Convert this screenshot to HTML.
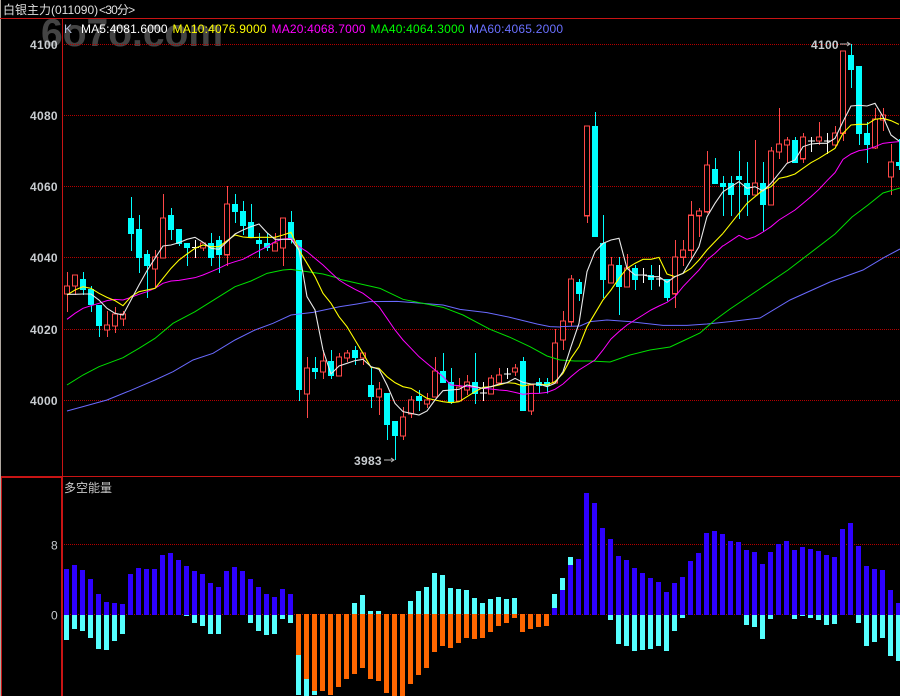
<!DOCTYPE html>
<html><head><meta charset="utf-8"><title>白银主力</title>
<style>
html,body{margin:0;padding:0;background:#000;width:900px;height:696px;overflow:hidden}
svg{display:block;position:absolute;left:0;top:0}
path,polyline,line{vector-effect:non-scaling-stroke;fill:none}
.c{shape-rendering:crispEdges}
.w{stroke:#00ffff;stroke-width:1}
.b{stroke:#00ffff;stroke-width:6}
.r{stroke:#ff4848;stroke-width:1.25}
.rb{stroke:#ff4848;stroke-width:1.25;fill:#000}
.x{stroke:#fff;stroke-width:1}
.m5{stroke:#e8e8e8;stroke-width:1.1}
.m10{stroke:#ffff00;stroke-width:1.1}
.m20{stroke:#ff00ff;stroke-width:1}
.m40{stroke:#00e000;stroke-width:1}
.m60{stroke:#6a6aff;stroke-width:1}
.t{font-family:"Liberation Sans","Noto Sans CJK SC",sans-serif;font-size:12px}
.lb{font-family:"Liberation Sans",sans-serif;font-size:12px;font-weight:bold;fill:#c8ccd0;letter-spacing:.3px}
.bar{stroke-width:5;shape-rendering:crispEdges}
</style></head>
<body>
<svg width="900" height="696" viewBox="0 0 900 696" xmlns="http://www.w3.org/2000/svg">
<defs><pattern id="dot" x="0" y="0" width="2" height="1" patternUnits="userSpaceOnUse"><rect x="0" y="0" width="1" height="1" fill="#b40000"/></pattern></defs>
<rect width="900" height="696" fill="#000"/>
<svg x="0" y="19" width="900" height="40" viewBox="0 19 900 40"><text x="41" y="46" font-family="Liberation Sans,sans-serif" font-size="39" font-weight="bold" fill="#444444">6o7o.com</text></svg>

<!-- frame -->
<g class="c">
<line x1="0.5" y1="0" x2="0.5" y2="696" stroke="#b0a8a0"/>
<line x1="0" y1="18.5" x2="900" y2="18.5" stroke="#c81414"/>
<line x1="62.5" y1="19" x2="62.5" y2="696" stroke="#c81414"/>
<line x1="61.5" y1="476" x2="61.5" y2="696" stroke="#c81414"/>
<line x1="1" y1="476.5" x2="900" y2="476.5" stroke="#c81414"/>
<line x1="1" y1="477.5" x2="62" y2="477.5" stroke="#c81414"/>
<line x1="1.5" y1="477" x2="1.5" y2="696" stroke="#c81414"/>
</g>
<!-- grid -->
<g fill="url(#dot)" class="c">
<rect x="63" y="44" width="837" height="1"/>
<rect x="63" y="115" width="837" height="1"/>
<rect x="63" y="186" width="837" height="1"/>
<rect x="63" y="257" width="837" height="1"/>
<rect x="63" y="329" width="837" height="1"/>
<rect x="63" y="400" width="837" height="1"/>
<rect x="63" y="544" width="837" height="1"/>
<rect x="63" y="614" width="837" height="1"/>
</g>

<!-- candles A -->
<g class="c" transform="translate(0 180) scale(1 .33333)">
<path class="r" d="M67.5 276V396M75.5 285V345M107.5 393V471M115.5 381V459M123.5 393V438M155.5 210V321M163.5 42V234M203.5 189V213M227.5 18V258M275.5 159V213M283.5 114V258"/>
<path class="rb" d="M64.5 318h5V342h-5zM72.5 285h5V318h-5zM104.5 435h5V450h-5zM112.5 402h5V438h-5zM120.5 402h5V417h-5zM152.5 231h5V267h-5zM160.5 114h5V234h-5zM200.5 189h5V204h-5zM224.5 72h5V224h-5zM272.5 189h5V213h-5zM280.5 114h5V204h-5z"/>
<path class="w" d="M83.5 276V345M91.5 318V396M99.5 375V471M131.5 51V213M139.5 105V279M147.5 210V354M171.5 84V180M179.5 147V198M187.5 189V258M211.5 159V258M219.5 168V279M235.5 42V129M243.5 63V165M251.5 72V174M259.5 159V234M267.5 159V213M291.5 93V190"/>
<path class="b" d="M83 297V330M91 327V375M99 375V438M131 114V162M139 147V234M147 222V258M171 105V150M179 147V192M187 189V204M211 189V234M219 180V225M235 72V96M243 93V138M251 126V174M259 180V192M267 189V204M291 126V180"/>
<path class="x" d="M195.5 180V234M192 203H199"/>
</g>
<!-- candles B -->
<g class="c" transform="translate(0 230) scale(1 .33333)">
<path class="r" d="M307.5 381V564M323.5 360V447M339.5 369V438M347.5 360V396M363.5 369V405M379.5 456V555M403.5 531V630M411.5 498V564M427.5 489V534M435.5 381V501M459.5 444V514M467.5 435V495M491.5 435V492M499.5 414V465M515.5 402V438M531.5 465V555M555.5 297V459"/>
<path class="rb" d="M304.5 414h5V492h-5zM320.5 393h5V426h-5zM336.5 381h5V438h-5zM344.5 369h5V384h-5zM360.5 369h5V384h-5zM376.5 477h5V501h-5zM400.5 561h5V618h-5zM408.5 510h5V552h-5zM424.5 510h5V522h-5zM432.5 423h5V501h-5zM456.5 471h5V513h-5zM464.5 456h5V480h-5zM488.5 444h5V492h-5zM496.5 435h5V459h-5zM512.5 414h5V426h-5zM528.5 465h5V543h-5zM552.5 339h5V459h-5z"/>
<path class="w" d="M299.5 30V513M315.5 381V447M331.5 360V447M355.5 348V405M371.5 414V534M387.5 489V630M395.5 573V690M419.5 480V543M443.5 369V459M451.5 414V522M475.5 369V522M523.5 381V543M539.5 444V490M547.5 444V490"/>
<path class="b" d="M299 30V480M315 414V426M331 393V438M355 360V384M371 465V501M387 489V585M395 573V618M419 498V513M443 423V459M451 456V516M475 456V492M523 393V543M539 456V468M547 456V468"/>
<path class="x" d="M483.5 456V513M480 489H487M507.5 414V447M504 432H511"/>
</g>
<!-- candles C -->
<g class="c" transform="translate(0 100) scale(1 .33333)">
<path class="r" d="M563.5 633V750M571.5 525V680M587.5 78V369M611.5 471V549M627.5 462V561M675.5 420V624M683.5 420V498M691.5 303V474M699.5 324V411M707.5 153V340"/>
<path class="rb" d="M560.5 663h5V720h-5zM568.5 537h5V665h-5zM584.5 78h5V347h-5zM608.5 495h5V549h-5zM624.5 504h5V561h-5zM672.5 471h5V581h-5zM680.5 450h5V472h-5zM688.5 346h5V451h-5zM696.5 333h5V347h-5zM704.5 195h5V335h-5z"/>
<path class="w" d="M579.5 537V603M595.5 36V411M603.5 345V594M619.5 471V645M635.5 495V570M651.5 495V570M667.5 537V603M715.5 174V252"/>
<path class="b" d="M579 546V582M595 78V411M603 429V540M619 495V561M635 504V540M651 525V540M667 537V594M715 207V252"/>
<path class="x" d="M643.5 504V549M640 525H647M659.5 495V560M656 537H663"/>
</g>
<!-- candles D -->
<g class="c" transform="translate(0 30) scale(1 .33333)">
<path class="r" d="M755.5 330V495M771.5 351V525M779.5 234V387M787.5 321V400M803.5 309V399M819.5 276V345M835.5 288V350M843.5 63V333M875.5 234V357M883.5 234V303M891.5 342V495"/>
<path class="rb" d="M752.5 459h5V495h-5zM768.5 363h5V525h-5zM776.5 342h5V366h-5zM784.5 330h5V345h-5zM800.5 321h5V386h-5zM816.5 321h5V333h-5zM832.5 309h5V345h-5zM840.5 63h5V310h-5zM872.5 267h5V354h-5zM880.5 255h5V270h-5zM888.5 396h5V441h-5z"/>
<path class="w" d="M723.5 438V558M731.5 438V558M739.5 363V567M747.5 396V558M763.5 396V606M795.5 321V399M851.5 42V174M859.5 108V345M867.5 276V399M899.5 327V420"/>
<path class="b" d="M723 459V471M731 459V495M739 438V450M747 459V495M763 459V525M795 330V399M851 75V120M859 108V312M867 309V345M899 396V408"/>
<path class="x" d="M811.5 321V366M808 333H815M827.5 309V372M824 333H831"/>
</g>

<!-- MA lines -->
<g transform="translate(0 180) scale(1 .33333)">
<polyline class="m60" points="67,693 83,680 107,660 130,632 155,600 173,575 193,540 213,520 235,480 255,450 273,430 291,405 313,397 340,380"/>
<polyline class="m40" points="67,615 83,585 99,560 123,533 139,505 155,475 173,430 195,395 219,350 235,320 251,303 267,280 283,270 291,268 307,275 323,282 340,296"/>
<polyline class="m20" points="67,418 75,400 83,385 91,377 99,370 107,362 115,358 123,360 131,352 139,343 147,335 155,325 163,310 171,303 179,301 187,297 195,293 203,285 211,275 219,265 227,253 235,245 243,238 251,225 259,212 267,200 275,185 283,177 291,175 299,200"/>
<polyline class="m10" points="67,345 75,330 83,320 91,325 99,340 107,352 115,362 123,377 131,350 139,335 147,330 155,325 163,295 171,265 179,240 187,222 195,205 203,195 211,200 219,200 227,182 235,165 243,171 251,173 259,172 267,172 275,172 283,165 291,157 299,210"/>
<polyline class="m5" points="67,343 75,343 83,342 91,342 99,360 107,385 115,400 123,405 131,360 139,315 147,272 155,235 163,198 171,195 179,188 187,178 195,172 203,187 211,205 219,208 227,185 235,162 243,150 251,140 259,132 267,158 275,178 283,178 291,178 299,210"/>
</g>
<g transform="translate(0 230) scale(1 .33333)">
<polyline class="m60" points="340,230 357,222 370,215 397,214 423,220 443,225 460,238 487,248 510,262 537,282 550,290 560,291"/>
<polyline class="m40" points="340,148 343,150 380,175 403,208 443,232 463,255 490,298 510,322 530,350 547,378 560,390"/>
<polyline class="m20" points="299,50 307,65 315,85 323,105 331,128 339,150 347,165 355,178 363,190 371,208 379,230 387,265 395,300 403,330 411,355 419,380 427,400 435,420 443,440 451,465 459,467 467,470 475,472 483,475 491,477 499,480 507,482 515,487 523,493 531,490 539,490 547,487 555,478 563,462"/>
<polyline class="m10" points="299,60 307,100 315,140 323,190 331,220 339,260 347,290 355,330 363,370 371,412 379,415 387,440 395,458 403,470 411,475 419,490 427,505 435,510 443,515 451,518 459,515 467,500 475,485 483,472 491,470 499,465 507,458 515,460 523,468 531,463 539,462 547,465 555,455 563,430"/>
<polyline class="m5" points="299,60 307,200 315,240 323,360 331,432 339,408 347,400 355,392 363,388 371,410 379,418 387,465 395,520 403,545 411,550 419,555 427,543 435,510 443,482 451,480 459,478 467,465 475,470 483,475 491,470 499,462 507,458 515,445 523,457 531,462 539,462 547,470 555,460 563,425"/>
</g>
<g transform="translate(0 100) scale(1 .33333)">
<polyline class="m60" points="560,680 580,678 590,665 607,660 630,665 663,676 687,676 707,672 730,665 760,654 790,600 830,546 863,510 885,471 900,447"/>
<polyline class="m40" points="560,780 575,783 590,783 610,786 630,765 650,750 670,741 685,720 700,699 715,660 730,627 788,510 835,402 852,351 868,315 883,279 900,264"/>
<polyline class="m20" points="563,852 571,830 579,810 587,795 595,780 603,750 611,717 619,695 627,675 635,660 643,645 651,630 659,618 667,607 675,590 683,560 691,535 699,510 707,480 715,460 723,437"/>
<polyline class="m10" points="563,820 571,775 579,740 587,680 595,640 603,600 611,570 619,535 627,505 635,490 643,478 651,478 659,472 667,522 675,530 683,520 691,505 699,480 707,450 715,425 723,400"/>
<polyline class="m5" points="563,815 571,740 579,670 587,515 595,455 603,430 611,420 619,415 627,505 635,525 643,525 651,530 659,530 667,547 675,530 683,520 691,480 699,440 707,350 715,310 723,275"/>
</g>
<g transform="translate(0 30) scale(1 .33333)">
<polyline class="m20" points="723,648 731,632 739,616 747,628 755,620 763,606 771,590 779,570 787,555 795,540 803,520 811,500 819,478 827,452 835,428 843,388 851,372 859,362 867,358 875,350 883,340 891,337 899,335"/>
<polyline class="m10" points="723,610 731,580 739,550 747,520 755,500 763,480 771,470 779,445 787,440 795,432 803,415 811,398 819,385 827,370 835,355 843,310 851,285 859,283 867,283 875,268 883,265 891,272 899,283"/>
<polyline class="m5" points="723,485 731,470 739,455 747,475 755,470 763,483 771,460 779,430 787,400 795,390 803,350 811,342 819,340 827,340 835,325 843,275 851,228 859,226 867,228 875,220 883,260 891,315 899,333"/>
</g>

<!-- lower bars -->
<g transform="translate(0 470) scale(1 .33333)">
<path class="bar" stroke="#55ffff" d="M66.5 435V510M74.5 435V477M82.5 435V483M90.5 435V504M98.5 435V537M106.5 435V540M114.5 435V513M122.5 435V492M186.5 435V438M194.5 435V459M202.5 435V468M210.5 435V492M218.5 435V492M250.5 435V459M258.5 435V483M266.5 435V495M274.5 435V492M282.5 435V447M290.5 435V459
M298.5 432V675M306.5 432V690M314.5 432V675
M354.5 432V399M362.5 432V375M370.5 432V423M378.5 432V423M410.5 432V393M418.5 432V363M426.5 432V351M434.5 432V309M442.5 432V315M450.5 432V354M458.5 432V357M466.5 432V360M474.5 432V384M482.5 432V399M490.5 432V387M498.5 432V381M506.5 432V387M514.5 432V384M554.5 435V372M562.5 435V324M570.5 435V261
M610.5 435V450M618.5 435V522M626.5 435V528M634.5 435V543M642.5 435V540M650.5 435V537M658.5 435V528M666.5 435V543M674.5 435V483M682.5 435V444M746.5 435V465M754.5 435V471M762.5 435V507M770.5 435V447M794.5 435V447M802.5 435V438M810.5 435V444M818.5 435V450M826.5 435V465M834.5 435V462M858.5 435V459M866.5 435V528M874.5 435V516M882.5 435V504M890.5 435V558M898.5 435V573"/>
<path class="bar" stroke="#ff6600" d="M298.5 432V555M306.5 432V627M314.5 432V663M322.5 432V663M330.5 432V675M338.5 432V651M346.5 432V627M354.5 432V612M362.5 432V594M370.5 432V627M378.5 432V633M386.5 432V669M394.5 432V690M402.5 432V690M410.5 432V642M418.5 432V615M426.5 432V594M434.5 432V546M442.5 432V528M450.5 432V534M458.5 432V519M466.5 432V504M474.5 432V507M482.5 432V504M490.5 432V486M498.5 432V468M506.5 432V459M514.5 432V444M522.5 432V486M530.5 432V477M538.5 432V471M546.5 432V468"/>
<path class="bar" stroke="#2e00ff" d="M66.5 435V297M74.5 435V285M82.5 435V300M90.5 435V327M98.5 435V372M106.5 435V396M114.5 435V399M122.5 435V402M130.5 435V312M138.5 435V294M146.5 435V297M154.5 435V297M162.5 435V255M170.5 435V249M178.5 435V270M186.5 435V288M194.5 435V303M202.5 435V312M210.5 435V339M218.5 435V351M226.5 435V303M234.5 435V291M242.5 435V303M250.5 435V327M258.5 435V351M266.5 435V372M274.5 435V381M282.5 435V357M290.5 435V372
M554.5 435V414M562.5 435V360M570.5 435V285M578.5 435V267M586.5 435V69M594.5 435V99M602.5 435V174M610.5 435V207M618.5 435V258M626.5 435V270M634.5 435V294M642.5 435V309M650.5 435V324M658.5 435V336M666.5 435V366M674.5 435V339M682.5 435V321M690.5 435V273M698.5 435V249M706.5 435V189M714.5 435V183M722.5 435V192M730.5 435V213M738.5 435V216M746.5 435V240M754.5 435V246M762.5 435V282M770.5 435V246M778.5 435V222M786.5 435V213M794.5 435V240M802.5 435V231M810.5 435V237M818.5 435V243M826.5 435V255M834.5 435V261M842.5 435V177M850.5 435V159M858.5 435V228M866.5 435V288M874.5 435V297M882.5 435V300M890.5 435V360M898.5 435V399"/>
</g>

<!-- annotations -->
<path d="M384 460H394M391 458l3 2-3 2" stroke="#b8b8b8" stroke-width="1"/>
<path d="M840 44H850M847 42l3 2-3 2" stroke="#b8b8b8" stroke-width="1"/>
<text class="lb" x="354" y="465">3983</text>
<text class="lb" x="811" y="49">4100</text>

<!-- axis labels -->
<text class="lb" x="30" y="49">4100</text>
<text class="lb" x="30" y="120">4080</text>
<text class="lb" x="30" y="191">4060</text>
<text class="lb" x="30" y="262">4040</text>
<text class="lb" x="30" y="334">4020</text>
<text class="lb" x="30" y="405">4000</text>
<text class="t" x="51" y="549.5" fill="#c8ccd0">8</text>
<text class="t" x="51" y="619.5" fill="#c8ccd0">0</text>

<!-- header text -->
<text class="t" x="3" y="14" fill="#e0e0e0">白银主力(011090)</text>
<text class="t" x="99" y="14" fill="#e0e0e0" letter-spacing="-.8">&lt;30分&gt;</text>
<text class="t" x="64" y="33" fill="#b8c4e0">K</text>
<text class="t" x="81" y="33" fill="#ffffff" letter-spacing=".15">MA5:4081.6000</text>
<text class="t" x="172.5" y="33" fill="#ffff00" letter-spacing=".2">MA10:4076.9000</text>
<text class="t" x="271.5" y="33" fill="#ff00ff" letter-spacing=".2">MA20:4068.7000</text>
<text class="t" x="370.5" y="33" fill="#00ff00" letter-spacing=".2">MA40:4064.3000</text>
<text class="t" x="469" y="33" fill="#6a70ff" letter-spacing=".2">MA60:4065.2000</text>
<text class="t" x="64" y="492" fill="#c8c8c8">多空能量</text>
</svg>
</body></html>
